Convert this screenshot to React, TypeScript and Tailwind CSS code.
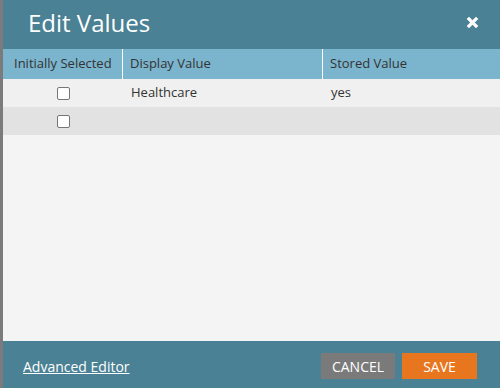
import React from "react";

export default function App() {
  const font = { fontFamily: '"Open Sans", "Liberation Sans", sans-serif' };
  return (
    <div className="w-[500px] h-[388px] flex bg-[#f4f4f4]" style={font}>
      <div className="w-[3px] h-full bg-[#7b7b7b] shrink-0" />
      <div className="flex-1 flex flex-col min-w-0">
        <div className="h-[49px] bg-[#4a8194] flex items-center justify-between pl-[25px] pr-[21px] pb-[4px] shrink-0">
          <span className="text-white text-[24px] leading-none">Edit Values</span>
          <svg width="13" height="13" viewBox="0 0 14 14">
            <path d="M2 2 L12 12 M12 2 L2 12" stroke="white" strokeWidth="3.6" strokeLinecap="butt" />
          </svg>
        </div>
        <div className="h-[30px] bg-[#7bb4cd] flex text-[13px] text-[#333] shrink-0">
          <div className="w-[120px] flex items-center pl-[11px] border-r border-white">Initially Selected</div>
          <div className="w-[200px] flex items-center pl-[7px] border-r border-white">Display Value</div>
          <div className="flex-1 flex items-center pl-[7px]">Stored Value</div>
        </div>
        <div className="h-[28px] bg-[#f0f0f0] flex text-[13px] text-[#333] shrink-0">
          <div className="w-[120px] flex items-center justify-center pl-[1px]">
            <span className="w-[13px] h-[13px] rounded-[2px] border border-[#767676] bg-white" />
          </div>
          <div className="w-[200px] flex items-center pl-[8px]">Healthcare</div>
          <div className="flex-1 flex items-center pl-[8px]">yes</div>
        </div>
        <div className="h-[28px] bg-[#e2e2e2] flex text-[13px] text-[#333] shrink-0">
          <div className="w-[120px] flex items-center justify-center pl-[1px]">
            <span className="w-[13px] h-[13px] rounded-[2px] border border-[#767676] bg-white" />
          </div>
        </div>
        <div className="flex-1" />
        <div className="h-[47px] bg-[#4a8194] flex items-center justify-between pl-[20px] pr-[23px] pt-[3px] shrink-0">
          <span className="text-white text-[14px] underline">Advanced Editor</span>
          <div className="flex gap-[7px] items-center">
            <button className="w-[74px] h-[26px] bg-[#7a7a7a] text-white text-[14px]">CANCEL</button>
            <button className="w-[75px] h-[26px] bg-[#e8761f] text-white text-[14px]">SAVE</button>
          </div>
        </div>
      </div>
    </div>
  );
}
